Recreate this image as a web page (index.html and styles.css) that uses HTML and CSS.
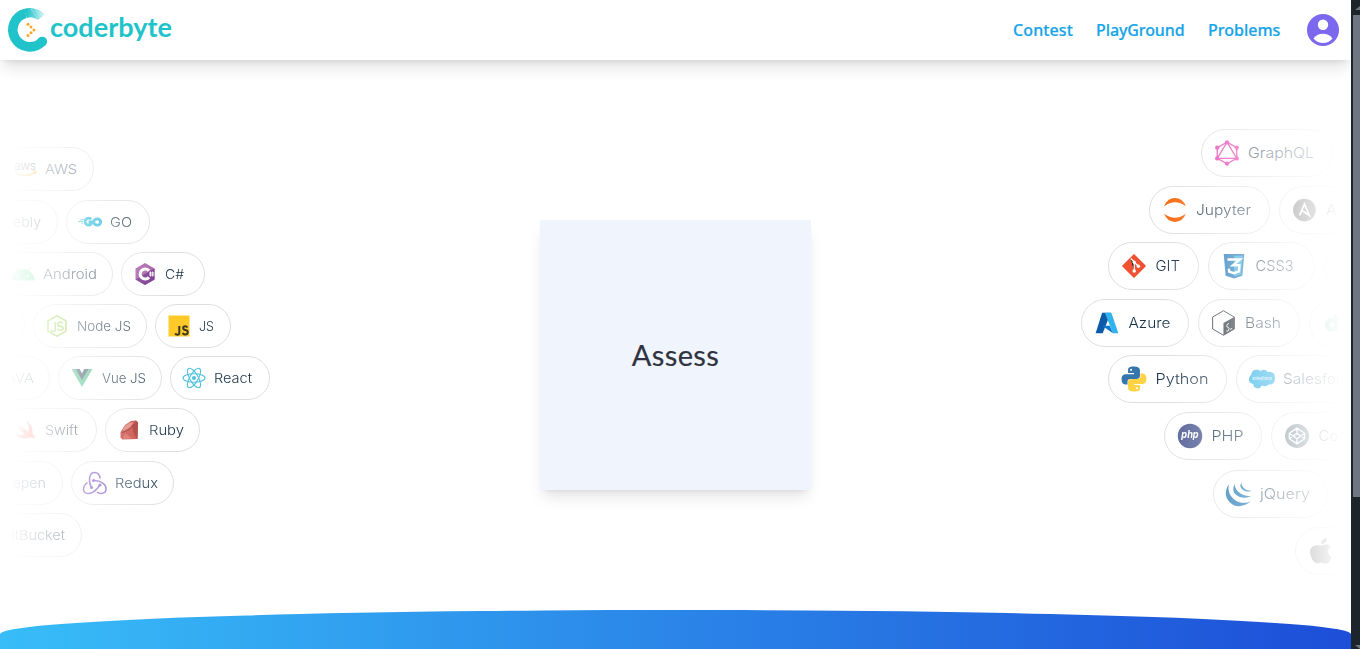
FILE: index.html
```html
<!DOCTYPE html>
<html lang="en">
<head>
<meta charset="utf-8">
<title>Coderbyte</title>
<link rel="stylesheet" href="styles.css">
</head>
<body>
<div class="page">
  <header class="header">
    <svg class="logo" width="180" height="60" viewBox="0 0 180 60">
      <defs><linearGradient id="cg" x1="0" y1="0" x2="1" y2="0"><stop offset=".1" stop-color="#1fc3c9"/><stop offset=".55" stop-color="#1fc3c9" stop-opacity=".65"/><stop offset="1" stop-color="#1fc3c9" stop-opacity=".15"/></linearGradient></defs>
      <path d="M42.200 41.500A17 17 0 1 1 25.500 13.400" fill="none" stroke="#1fc3c9" stroke-width="9.600"/>
      <circle cx="42.300" cy="41.500" r="4.800" fill="#1fc3c9"/>
      <path d="M23.900 8.900Q35 5.800 45 14.500L38 19.800Q32.500 16 27 17.900Z" fill="url(#cg)"/>
      <path d="M31 9l7 9.500M34.500 9l5.500 8M38 10.500l4 5.500" stroke="#fff" stroke-width=".6" opacity=".6"/>
      <g fill="#f9a72b"><circle cx="28" cy="24.200" r="1.500"/><circle cx="31" cy="27" r="1.500"/><circle cx="34" cy="30" r="1.500"/><circle cx="31" cy="32.800" r="1.500"/><circle cx="28" cy="35.500" r="1.500"/></g>
      <text class="wordmark" x="50" y="36.700" textLength="122" lengthAdjust="spacingAndGlyphs">coderbyte</text>
    </svg>
    <nav class="nav">
      <a class="link contest">Contest</a>
      <a class="link playground">PlayGround</a>
      <a class="link problems">Problems</a>
      <svg class="avatar" width="32" height="32" viewBox="0 0 32 32"><circle cx="16" cy="16" r="16" fill="#7b68ee"/><circle cx="16" cy="10.800" r="5.200" fill="#fff"/><path d="M6.500 24.500C9 21 12.500 19.800 16 19.800s7 1.200 9.500 4.700C23 27.600 19.500 29 16 29s-7-1.400-9.500-4.500Z" fill="#fff"/></svg>
    </nav>
  </header>
  <main class="hero">
    <section class="cloud cloud-left">
      <div class="row l1">
        <div class="pill"><svg class="icon" viewBox="0 0 24 24"><text x="1" y="12.500" font-size="12" textLength="22" fill="#252f3e">aws</text><path d="M2 15.500q10 6 20 0M20 14.500l3-.3-.5 3" fill="none" stroke="#f90" stroke-width="1.500"/></svg><svg class="label" width="33" height="20"><text y="14.500" textLength="32" lengthAdjust="spacingAndGlyphs">AWS</text></svg></div>
      </div>
      <div class="row l2">
        <div class="pill"><svg class="icon" viewBox="0 0 24 24"></svg><svg class="label" width="50" height="20"><text y="14.500" textLength="49" lengthAdjust="spacingAndGlyphs">Weebly</text></svg></div>
        <div class="pill"><svg class="icon" viewBox="0 0 24 24"><path d="M2 9.800h4M0 11.500h5M3 13.200h2" stroke="#00acd7" stroke-width=".8"/><g fill="none" stroke="#00acd7" stroke-width="2.800"><path d="M13.200 9.300A3.500 3.500 0 1 0 13.500 13.500L13.800 12H10.500"/><ellipse cx="19.200" cy="12" rx="3.500" ry="3.200"/></g></svg><svg class="label" width="24" height="20"><text y="14.500" textLength="22" lengthAdjust="spacingAndGlyphs">GO</text></svg></div>
      </div>
      <div class="row l3">
        <div class="pill"><svg class="icon" viewBox="0 0 24 24"><path d="M1 18a11 10.500 0 0 1 22 0ZM5 6l3 5M19 6l-3 5" fill="#3ddc84" stroke="#3ddc84"/><circle cx="7" cy="14" r="1" fill="#fff"/><circle cx="17" cy="14" r="1" fill="#fff"/></svg><svg class="label" width="54" height="20"><text y="14.500" textLength="54" lengthAdjust="spacingAndGlyphs">Android</text></svg></div>
        <div class="pill"><svg class="icon" viewBox="0 0 24 24"><path d="M12 1l9.500 5.500v11L12 23l-9.500-5.500v-11Z" fill="#a45aa4"/><path d="M21.500 6.500v11L12 23l-9.500-5.500Z" fill="#702b86"/><path d="M16 8.800A5 5 0 1 0 16 15.200" fill="none" stroke="#fff" stroke-width="3"/><path d="M17.500 9.500v5M19.700 9.500v5M16 11h5.300M16 13h5.300" stroke="#fff" stroke-width=".9"/></svg><svg class="label" width="24" height="20"><text y="14.500" textLength="19" lengthAdjust="spacingAndGlyphs">C#</text></svg></div>
      </div>
      <div class="row l4">
        <div class="pill"><svg class="icon" viewBox="0 0 24 24"></svg><svg class="label" width="20" height="20"></svg></div>
        <div class="pill"><svg class="icon" viewBox="0 0 24 24"><path d="M12 1.700l9 5.200v10.200l-9 5.200-9-5.200V6.900Z" fill="none" stroke="#83cd29" stroke-width="1.600"/><path d="M10.300 8v7.500q0 2-2 2T5.800 16M18 9.200q-1-1.200-3-1-2.500.2-2.500 2t2.800 2 2.900 2.100-2.700 2-3.200-1.500" fill="none" stroke="#83cd29" stroke-width="1.500"/></svg><svg class="label" width="54" height="20"><text y="14.500" textLength="54" lengthAdjust="spacingAndGlyphs">Node JS</text></svg></div>
        <div class="pill"><svg class="icon" viewBox="0 0 24 24"><path d="M1.500 1.500h21v21h-21Z" fill="#ffca28"/><path d="M12.300 12v6.700q0 2-1.800 2t-2.300-1.400M20.500 13.500q-.8-1.300-2.300-1.300-2 0-2 1.700t2.300 2.100 2.300 2.300-2.200 2.200-2.900-1.600" fill="none" stroke="#3e3723" stroke-width="2"/></svg><svg class="label" width="16" height="20"><text y="14.500" textLength="15" lengthAdjust="spacingAndGlyphs">JS</text></svg></div>
      </div>
      <div class="row l5">
        <div class="pill"><svg class="icon" viewBox="0 0 24 24"></svg><svg class="label" width="36" height="20"><text y="14.500" textLength="36" lengthAdjust="spacingAndGlyphs">JAVA</text></svg></div>
        <div class="pill"><svg class="icon" viewBox="0 0 24 24"><path d="M1.500 3h21L12 21Z" fill="#41b883"/><path d="M5.600 3h12.800L12 14Z" fill="#35495e"/><path d="M9.600 3h4.800L12 7.200Z" fill="#fff"/></svg><svg class="label" width="44" height="20"><text y="14.500" textLength="44" lengthAdjust="spacingAndGlyphs">Vue JS</text></svg></div>
        <div class="pill"><svg class="icon" viewBox="0 0 24 24"><g fill="none" stroke="#53c1de" stroke-width="1.100"><ellipse cx="12" cy="12" rx="11" ry="4.200"/><ellipse cx="12" cy="12" rx="11" ry="4.200" transform="rotate(60 12 12)"/><ellipse cx="12" cy="12" rx="11" ry="4.200" transform="rotate(120 12 12)"/></g><circle cx="12" cy="12" r="2.100" fill="#53c1de"/></svg><svg class="label" width="40" height="20"><text y="14.500" textLength="38" lengthAdjust="spacingAndGlyphs">React</text></svg></div>
      </div>
      <div class="row l6">
        <div class="pill"><svg class="icon" viewBox="0 0 24 24"><path d="M13.500 3c5 3.500 7 8 5.800 12.500 2.500 2.500 2.300 4 2 5.500-1.300-2-2.800-1.700-4.300-1.200C11 22 4.500 19.500 1 14.500c4 2.500 8 3 10.500 1.500C8 13.500 5 10 3.500 7.500c3 2.500 5 4 7.500 5.500-2-2-4-5-5-7 3.500 3.500 6.500 6 9.500 7.500 1-3.500 0-7-2-10.500Z" fill="#f05138"/></svg><svg class="label" width="36" height="20"><text y="14.500" textLength="33" lengthAdjust="spacingAndGlyphs">Swift</text></svg></div>
        <div class="pill"><svg class="icon" viewBox="0 0 24 24"><path d="M3.500 14L8 7l6-4 5-.5 2 2L20.500 21l-15 .5-2-2Z" fill="#c2352b"/><path d="M19 2.500l2 2L20.500 21 17 16l-2-6Z" fill="#9e2118"/><path d="M6 11.500q2.500-6 10-7.500 0 5-10.500 9Z" fill="#e0796e"/><path d="M8 15l7 5.500-9 .3Z" fill="#d4544a"/><path d="M5 14.500q8-1.500 12-8.500" fill="none" stroke="#7d170f" stroke-width="1"/></svg><svg class="label" width="35" height="20"><text y="14.500" textLength="35" lengthAdjust="spacingAndGlyphs">Ruby</text></svg></div>
      </div>
      <div class="row l7">
        <div class="pill"><svg class="icon" viewBox="0 0 24 24"></svg><svg class="label" width="62" height="20"><text y="14.500" textLength="61" lengthAdjust="spacingAndGlyphs">Codepen</text></svg></div>
        <div class="pill"><svg class="icon" viewBox="0 0 24 24"><g fill="none" stroke="#764abc" stroke-width="1.500"><path d="M8.500 16.500C5 10.500 6 1.500 11.500 1.500q5 0 5.500 6"/><path d="M10.500 9.500C17 9 23.500 13.500 23 18.500c-.4 5-7 4.500-9 2.500"/><path d="M17 13.500C14 20 6 24.500 2 21.500c-3.500-3-.5-8.500 2.500-10"/></g><g fill="#764abc"><circle cx="10.500" cy="9.500" r="1.600"/><circle cx="8.500" cy="16.500" r="1.600"/><circle cx="17" cy="14" r="1.600"/></g></svg><svg class="label" width="43" height="20"><text y="14.500" textLength="43" lengthAdjust="spacingAndGlyphs">Redux</text></svg></div>
      </div>
      <div class="row l8">
        <div class="pill"><svg class="icon" viewBox="0 0 24 24"></svg><svg class="label" width="64" height="20"><text y="14.500" textLength="63" lengthAdjust="spacingAndGlyphs">BitBucket</text></svg></div>
      </div>
    </section>

    <div class="card"><span class="card-title">Assess</span></div>

    <section class="cloud cloud-right">
      <div class="row r1">
        <div class="pill"><svg class="icon" viewBox="0 0 24 24"><g fill="none" stroke="#e535ab" stroke-width="1.200"><path d="M12 2l9 5v10l-9 5-9-5V7Z"/><path d="M12 2l9 15H3Z"/></g><g fill="#e535ab"><circle cx="12" cy="2.200" r="2"/><circle cx="21" cy="7" r="2"/><circle cx="21" cy="17" r="2"/><circle cx="12" cy="21.800" r="2"/><circle cx="3" cy="17" r="2"/><circle cx="3" cy="7" r="2"/></g></svg><svg class="label" width="67" height="22"><text y="16" textLength="66" lengthAdjust="spacingAndGlyphs">GraphQL</text></svg></div>
      </div>
      <div class="row r2">
        <div class="pill"><svg class="icon" viewBox="0 0 24 24"><path d="M2 8.500Q5 1 12 1T22 8.500Q17 4.800 12 4.800T2 8.500ZM2 15.500q3 7.500 10 7.500t10-7.500q-5 3.700-10 3.700T2 15.500Z" fill="#f5650a"/></svg><svg class="label" width="56" height="22"><text y="16" textLength="55" lengthAdjust="spacingAndGlyphs">Jupyter</text></svg></div>
        <div class="pill"><svg class="icon" viewBox="0 0 24 24"><circle cx="11.500" cy="12" r="10.500" fill="#444"/><path d="M7 17L11.500 6.500 16 17 8.500 12" fill="none" stroke="#fff" stroke-width="1.600"/></svg><svg class="label" width="56" height="22"><text y="16" textLength="54" lengthAdjust="spacingAndGlyphs">Ansible</text></svg></div>
      </div>
      <div class="row r3">
        <div class="pill"><svg class="icon" viewBox="0 0 24 24"><path d="M12 1.800L22.200 12 12 22.200 1.800 12Z" fill="#f05133" stroke="#f05133" stroke-width="1.500" stroke-linejoin="round"/><path d="M9 5l3.200 3.300v8.500M12.200 8.500l3.700 3.500" stroke="#fff" stroke-width="1.300"/><g fill="#fff"><circle cx="12.200" cy="8.500" r="1.600"/><circle cx="12.200" cy="16.600" r="1.600"/><circle cx="16" cy="12.200" r="1.600"/></g></svg><svg class="label" width="25.500" height="22"><text x=".5" y="16" textLength="24.500" lengthAdjust="spacingAndGlyphs">GIT</text></svg></div>
        <div class="pill"><svg class="icon" viewBox="0 0 24 24"><path d="M2.500 1h19l-1.800 20L12 23.500 4.300 21Z" fill="#1572b6"/><path d="M12 2.500h8l-1.600 17.300L12 21.800Z" fill="#33a9dc"/><path d="M6 6h11.500L11 11.300h6l-.4 5.700-4.600 1.600-4.500-1.500-.2-2.600" fill="none" stroke="#fff" stroke-width="2.200"/></svg><svg class="label" width="42" height="22"><text x=".5" y="16" textLength="38" lengthAdjust="spacingAndGlyphs">CSS3</text></svg></div>
        <div class="pill"><svg class="icon" viewBox="0 0 24 24"></svg><svg class="label" width="50" height="22"></svg></div>
      </div>
      <div class="row r4">
        <div class="pill"><svg class="icon" viewBox="0 0 24 24"><path d="M7.500 2.500h8L8 21.500H1.500Z" fill="#0c5aa8"/><path d="M10 2.500h6l6.500 19h-5Z" fill="#32b3ee"/><path d="M7.500 14.500h7L17.500 21.500Z" fill="#0878d4"/></svg><svg class="label" width="43" height="22"><text x=".5" y="16" textLength="42" lengthAdjust="spacingAndGlyphs">Azure</text></svg></div>
        <div class="pill"><svg class="icon" viewBox="0 0 24 24"><path d="M11.500.7l10 5.800v11l-10 5.800-10-5.800v-11Z" fill="#fff" stroke="#293138" stroke-width=".9"/><path d="M11.500 12l10.300-5.700v11.300l-10.300 5.900Z" fill="#293138"/><path d="M16.500 12.500q-2 .5-2 2t1.500 1.500-.1 3.200q-1.200.7-1.800.2M17.500 18l2-1" fill="none" stroke="#fff" stroke-width=".9"/></svg><svg class="label" width="37" height="22"><text y="16" textLength="36" lengthAdjust="spacingAndGlyphs">Bash</text></svg></div>
        <div class="pill"><svg class="icon" viewBox="0 0 24 24"><path d="M13 4v13.500q-8 1.500-8-4t8-3.500M18 9v10q0 2-3 3" fill="none" stroke="#44b78b" stroke-width="4"/></svg><svg class="label" width="50" height="22"></svg></div>
      </div>
      <div class="row r5">
        <div class="pill"><svg class="icon" viewBox="0 0 24 24"><path d="M12 .5C7 .5 6.500 2 6.500 4v2.500H12V7.500H4C1.500 7.500.5 9.500.5 12s1 5 3.500 5h2v-2.500Q6 12 8.500 12h5.500q3.500 0 3.500-3V4Q17.500.5 12 .5Z" fill="#3776ab"/><circle cx="9.300" cy="3.500" r="1" fill="#fff"/><path d="M12 .5C7 .5 6.500 2 6.500 4v2.500H12V7.500H4C1.500 7.500.5 9.500.5 12s1 5 3.500 5h2v-2.500Q6 12 8.500 12h5.500q3.500 0 3.500-3V4Q17.500.5 12 .5Z" fill="#ffd343" transform="rotate(180 12 12)"/><circle cx="14.700" cy="20.500" r="1" fill="#fff"/></svg><svg class="label" width="53.500" height="22"><text x=".5" y="16" textLength="53" lengthAdjust="spacingAndGlyphs">Python</text></svg></div>
        <div class="pill"><svg class="icon" viewBox="0 0 24 24"><path d="M2 8Q3 2.500 8 3.500q2 .3 2.500 1.300Q15 2 17 5.500q7-1 7 5.500t-6 6q-3 3-6 .8-2 4-5.500 2.500-2.500-1-2.500-3.500Q-.5 15.500 0 12q.3-3 2-4Z" fill="#00a1e0"/><text x="3" y="12.500" font-size="4.500" font-style="italic" textLength="18" lengthAdjust="spacingAndGlyphs" fill="#fff">salesforce</text></svg><svg class="label" width="76" height="22"><text y="16" textLength="76" lengthAdjust="spacingAndGlyphs">Salesforce</text></svg></div>
      </div>
      <div class="row r6">
        <div class="pill"><svg class="icon" viewBox="0 0 24 24"><circle cx="12" cy="12" r="11.300" fill="#4f5b93"/><text x="4" y="14" font-size="9" font-style="italic" font-weight="700" textLength="16" lengthAdjust="spacingAndGlyphs" fill="#fff">php</text></svg><svg class="label" width="33" height="22"><text x=".5" y="16" textLength="32" lengthAdjust="spacingAndGlyphs">PHP</text></svg></div>
        <div class="pill"><svg class="icon" viewBox="0 0 24 24"><circle cx="12" cy="12" r="11" fill="#3f5a68"/><path d="M12 4.700l7 4.800v5l-7 4.800-7-4.800v-5ZM12 4.700v4.800M12 14.500v4.800M5 9.500l7 5 7-5M5 14.500l7-5 7 5" fill="none" stroke="#fff" stroke-width="1.300"/></svg><svg class="label" width="64" height="22"><text x=".5" y="16" textLength="64" lengthAdjust="spacingAndGlyphs">Codepen</text></svg></div>
      </div>
      <div class="row r7">
        <div class="pill"><svg class="icon" viewBox="0 0 24 24"><g fill="#0769ad"><path d="M2.500 3Q-3.500 13 4 20t19-1Q14 22 7.500 17T2.500 3Z"/><path d="M8.500 2q-4 6.500 1 11t14 1q-7.500.5-12-4t-3-8Z"/><path d="M14.500 1q-3 4 1 7t8 1q-5 0-7.500-3t-1.500-5Z"/></g></svg><svg class="label" width="50" height="22"><text y="16" textLength="50" lengthAdjust="spacingAndGlyphs">jQuery</text></svg></div>
      </div>
      <div class="row r8">
        <div class="pill"><svg class="icon" viewBox="0 0 24 24"><path d="M12 7.200c1.800 0 5.500-3 9.200.8-4 3-3 8 .8 9.500-2.500 6.500-5 7-10 5-5.500 2.500-8-1-9.700-7C.5 9 5 5 12 7.200ZM12 6q0-5 5.500-6.300Q17.500 5 12 6Z" fill="#444"/></svg><svg class="label" width="50" height="22"></svg></div>
      </div>
    </section>
  </main>
  <footer class="wave"></footer>
</div>
<div class="scrollbar"><i class="arrow up"></i><div class="thumb"></div><i class="arrow down"></i></div>
</body>
</html>
```

FILE: styles.css
```css
* { box-sizing: border-box; }
body {
  margin: 0;
  display: flex;
  width: 1360px;
  height: 649px;
  overflow: hidden;
  background: #fff;
  font-family: Inter, sans-serif;
}
.page { width: 1351px; height: 649px; display: flex; flex-direction: column; }

.header {
  height: 60px;
  flex: none;
  display: flex;
  align-items: center;
  justify-content: space-between;
  background: #fff;
  padding-right: 12px;
  box-shadow: 0 10px 15px -3px rgba(0, 0, 0, .12), 0 4px 6px -4px rgba(0, 0, 0, .12);
}
.logo { display: block; }
.wordmark { font: 700 27px Lato, sans-serif; fill: #1fc3c9; }
.nav { display: flex; align-items: center; }
.link {
  font: 500 16px/24px "Noto Sans", sans-serif;
  color: #16a4e8;
  -webkit-text-stroke: .2px #16a4e8;
  margin-right: 24px;
  white-space: nowrap;
}
.contest { width: 59px; letter-spacing: .1px; }
.playground { width: 88px; letter-spacing: -.1px; }
.problems { width: 71px; letter-spacing: 0; margin-right: 28px; }
.avatar { display: block; }

.hero {
  height: 550px;
  flex: none;
  display: flex;
  justify-content: space-between;
  padding: 0 13px 0 12px;
}
.cloud { display: flex; flex-direction: column; width: 258px; overflow: hidden; }
.cloud-left {
  padding-top: 87.4px;
  gap: 8.2px;
  -webkit-mask-image: linear-gradient(90deg, rgba(0, 0, 0, .03), #000 160px);
  mask-image: linear-gradient(90deg, rgba(0, 0, 0, .03), #000 160px);
}
.cloud-right {
  padding-top: 69px;
  gap: 8.5px;
  -webkit-mask-image: linear-gradient(270deg, rgba(0, 0, 0, .03), #000 180px);
  mask-image: linear-gradient(270deg, rgba(0, 0, 0, .03), #000 180px);
}
.row { display: flex; flex: none; }
.cloud-left .row { justify-content: flex-end; gap: 8px; height: 44px; }
.cloud-right .row { gap: 9px; height: 48px; }
.pill {
  flex: none;
  display: flex;
  align-items: center;
  border: 1px solid #dcdfe0;
  border-radius: 24px;
  background: #fff;
}
.cloud-left .pill { gap: 8px; padding: 0 15px 0 11px; }
.cloud-right .pill { gap: 8px; padding: 0 17px 0 12px; }
.icon { flex: none; overflow: visible; }
.cloud-left .icon { width: 24px; height: 24px; }
.cloud-right .icon { width: 26px; height: 26px; }
.label { flex: none; overflow: visible; fill: #183247; font-size: 13.5px; font-weight: 350; }
.cloud-right .label { font-size: 14.5px; }

.l1 { padding-right: 176px; }
.l2 { padding-right: 120px; }
.l3 { padding-right: 65px; }
.l4 { padding-right: 39px; }
.l6 { padding-right: 70px; }
.l7 { padding-right: 96px; }
.l8 { padding-right: 188px; }

.r1 { padding-left: 121px; }
.r2 { padding-left: 69px; }
.r3 { padding-left: 28px; }
.r4 { padding-left: 1px; }
.r5 { padding-left: 28px; }
.r6 { padding-left: 84px; margin-top: .8px; }
.r7 { padding-left: 133px; margin-top: .8px; }
.r8 { padding-left: 215px; margin-top: .8px; }

.card {
  width: 271px;
  height: 270px;
  margin: 160px 0 0 1px;
  display: flex;
  align-items: center;
  justify-content: center;
  background: #eff4fd;
  border-radius: 0 0 4px 4px;
  box-shadow: 0 10px 15px -3px rgba(0, 0, 0, .1), 0 4px 6px -4px rgba(0, 0, 0, .1);
}
.card-title { font: 400 29px/36px Lato, sans-serif; letter-spacing: .4px; color: #30333f; -webkit-text-stroke: .2px #30333f; }

.wave {
  height: 39px;
  flex: none;
  background: linear-gradient(90deg, #38bdf8, #1d4ed8);
  border-radius: 50% 50% 0 0 / 24px 24px 0 0;
}

.scrollbar {
  width: 9px;
  height: 649px;
  display: flex;
  flex-direction: column;
  align-items: flex-end;
  background: #1c252c;
}
.thumb { width: 7px; height: 482px; margin: 5px 0 auto; background: #6e7681; }
.arrow { width: 5px; height: 4px; background: #6e7681; }
.up { margin-top: 6px; clip-path: polygon(100% 0, 100% 100%, 0 100%); }
.down { clip-path: polygon(0 0, 100% 0, 100% 100%); }
```
